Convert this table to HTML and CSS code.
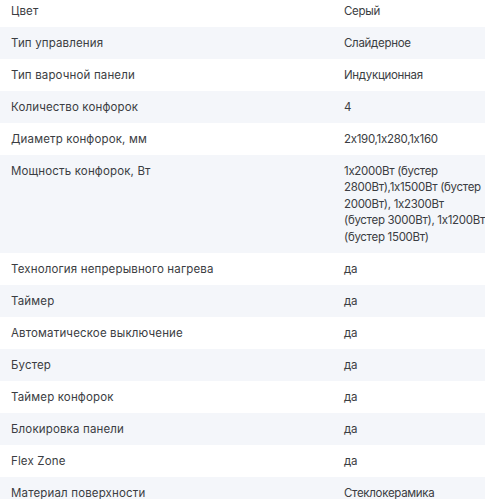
FILE: index.html
```html
<!DOCTYPE html>
<html lang="ru">
<head>
<meta charset="utf-8">
<link rel="stylesheet" href="styles.css">
</head>
<body>
<div class="specs">
  <div class="row"><div class="label">Цвет</div><div class="value">Серый</div></div>
  <div class="row"><div class="label">Тип управления</div><div class="value">Слайдерное</div></div>
  <div class="row"><div class="label">Тип варочной панели</div><div class="value">Индукционная</div></div>
  <div class="row"><div class="label">Количество конфорок</div><div class="value">4</div></div>
  <div class="row"><div class="label">Диаметр конфорок, мм</div><div class="value">2х190,1х280,1х160</div></div>
  <div class="row"><div class="label">Мощность конфорок, Вт</div><div class="value">1х2000Вт (бустер 2800Вт),1х1500Вт (бустер 2000Вт), 1х2300Вт (бустер 3000Вт), 1х1200Вт (бустер 1500Вт)</div></div>
  <div class="row"><div class="label">Технология непрерывного нагрева</div><div class="value">да</div></div>
  <div class="row"><div class="label">Таймер</div><div class="value">да</div></div>
  <div class="row"><div class="label">Автоматическое выключение</div><div class="value">да</div></div>
  <div class="row"><div class="label">Бустер</div><div class="value">да</div></div>
  <div class="row"><div class="label">Таймер конфорок</div><div class="value">да</div></div>
  <div class="row"><div class="label">Блокировка панели</div><div class="value">да</div></div>
  <div class="row"><div class="label">Flex Zone</div><div class="value">да</div></div>
  <div class="row"><div class="label">Материал поверхности</div><div class="value">Стеклокерамика</div></div>
</div>
</body>
</html>
```
FILE: styles.css
```css
html, body {
  margin: 0;
  padding: 0;
  background: #ffffff;
  overflow: hidden;
}
body {
  font-family: Inter, Roboto, "Noto Sans", sans-serif;
  font-size: 11.5px;
  color: #3b3d42;
}
.specs {
  display: flex;
  flex-direction: column;
  margin-top: -5px;
  width: 500px;
}
.row {
  display: flex;
  padding: 7.75px 0;
  line-height: 16.5px;
}
.row:nth-child(even) {
  background: #f4f6fa;
}
.label {
  width: 333px;
  padding-left: 11px;
  flex-shrink: 0;
  letter-spacing: 0.15px;
}
.value {
  width: 143px;
  letter-spacing: -0.3px;
}
```
